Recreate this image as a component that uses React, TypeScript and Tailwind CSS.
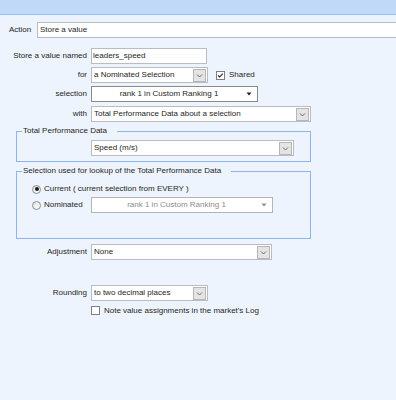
import React from "react";

const DropButton = () => (
  <div className="w-[13px] h-[13px] mr-[1px] border border-[#b7b7b7] bg-[#e4e4e4] flex items-center justify-center">
    <svg width="9" height="9" viewBox="0 0 9 9">
      <path d="M2 3.5 L4.5 6 L7 3.5" fill="none" stroke="#6b6b6b" strokeWidth="1" />
    </svg>
  </div>
);

const Select = ({ text, w }: { text: string; w: string }) => (
  <div className={`${w} h-[16px] flex items-center border border-[#b9bcc2] bg-white`}>
    <span className="flex-1 pl-[2px] whitespace-nowrap overflow-hidden">{text}</span>
    <DropButton />
  </div>
);

const Combo = ({ text, w, muted }: { text: string; w: string; muted?: boolean }) => (
  <div
    className={`${w} h-[16px] flex items-center bg-white border ${
      muted ? "border-[#b4b4b4] text-[#8c8c8c]" : "border-[#8a8a8a] text-[#1e1e1e]"
    }`}
  >
    <span className="flex-1 text-center whitespace-nowrap">{text}</span>
    <span className="w-[11px] flex items-center">
      <svg width="6" height="4" viewBox="0 0 6 4">
        <path d="M0.5 0.5 L5.5 0.5 L3 3.5 Z" fill={muted ? "#8c8c8c" : "#202020"} />
      </svg>
    </span>
  </div>
);

const Check = ({ checked }: { checked?: boolean }) => (
  <span className="w-[9px] h-[9px] border border-[#7f8080] bg-white flex items-center justify-center">
    {checked && (
      <svg width="7" height="7" viewBox="0 0 7 7">
        <path d="M1 3.3 L2.7 5 L5.8 1.6" fill="none" stroke="#1a1a1a" strokeWidth="1.1" />
      </svg>
    )}
  </span>
);

const Radio = ({ checked }: { checked?: boolean }) => (
  <span className="w-[9px] h-[9px] rounded-full border border-[#8e8f8f] bg-gradient-to-br from-[#e2e2e2] to-white flex items-center justify-center">
    {checked && <span className="w-[4px] h-[4px] rounded-full bg-[#1c1c1c]" />}
  </span>
);

const Row = ({ label, children, className = "" }: { label: string; children: React.ReactNode; className?: string }) => (
  <div className={`flex items-center h-[16px] ${className}`}>
    <span className="w-[87px] text-right whitespace-nowrap">{label}</span>
    <div className="ml-[4px] flex items-center">{children}</div>
  </div>
);

export default function App() {
  return (
    <div className="w-[396px] h-[400px] overflow-hidden bg-[#eef4fd] text-[8px] text-[#1e1e1e] font-['Liberation_Sans',Arial,sans-serif]">
      <div className="h-[15px] bg-[#c0d9f8] border-b border-[#9ebfe9]" />

      {/* Action */}
      <div className="mt-[7px] flex items-center h-[16px]">
        <span className="w-[37px] pl-[9px]">Action</span>
        <div className="flex-1 h-full flex items-center bg-white border-y border-l border-[#b9bcc2] pl-[2px]">
          Store a value
        </div>
      </div>

      <Row label="Store a value named" className="mt-[10px]">
        <div className="w-[116px] h-[16px] flex items-center border border-[#b9bcc2] bg-white pl-[1px]">
          leaders_speed
        </div>
      </Row>

      <Row label="for" className="mt-[3px]">
        <Select text="a Nominated Selection" w="w-[117px]" />
        <span className="ml-[8px] flex items-center gap-[4px]">
          <Check checked />
          Shared
        </span>
      </Row>

      <Row label="selection" className="mt-[3px]">
        <Combo text="rank 1 in Custom Ranking 1" w="w-[167px]" />
      </Row>

      <Row label="with" className="mt-[4px]">
        <Select text="Total Performance Data about a selection" w="w-[220px]" />
      </Row>

      <fieldset className="mt-[4px] ml-[16px] w-[295px] border border-[#8db5ec] pb-[5px]">
        <legend className="ml-[5px] pl-[1px] pr-[10px] leading-[10px]">Total Performance Data</legend>
        <div className="mt-[4px] pl-[74px]">
          <Select text="Speed (m/s)" w="w-[203px]" />
        </div>
      </fieldset>

      <fieldset className="mt-[4px] ml-[16px] w-[295px] border border-[#8db5ec] pb-[25px]">
        <legend className="ml-[5px] pl-[1px] pr-[10px] leading-[10px]">
          Selection used for lookup of the Total Performance Data
        </legend>
        <div className="mt-[5px] pl-[15px] flex items-center h-[16px] gap-[3px]">
          <Radio checked />
          <span>Current ( current selection from EVERY )</span>
        </div>
        <div className="pl-[15px] flex items-center h-[16px]">
          <span className="w-[59px] flex items-center gap-[3px]">
            <Radio />
            <span>Nominated</span>
          </span>
          <Combo text="rank 1 in Custom Ranking 1" w="w-[182px]" muted />
        </div>
      </fieldset>

      <Row label="Adjustment" className="mt-[5px]">
        <Select text="None" w="w-[181px]" />
      </Row>

      <Row label="Rounding" className="mt-[25px]">
        <Select text="to two decimal places" w="w-[117px]" />
      </Row>

      <div className="mt-[5px] ml-[91px] flex items-center h-[9px] gap-[4px]">
        <Check />
        <span>Note value assignments in the market's Log</span>
      </div>
    </div>
  );
}
